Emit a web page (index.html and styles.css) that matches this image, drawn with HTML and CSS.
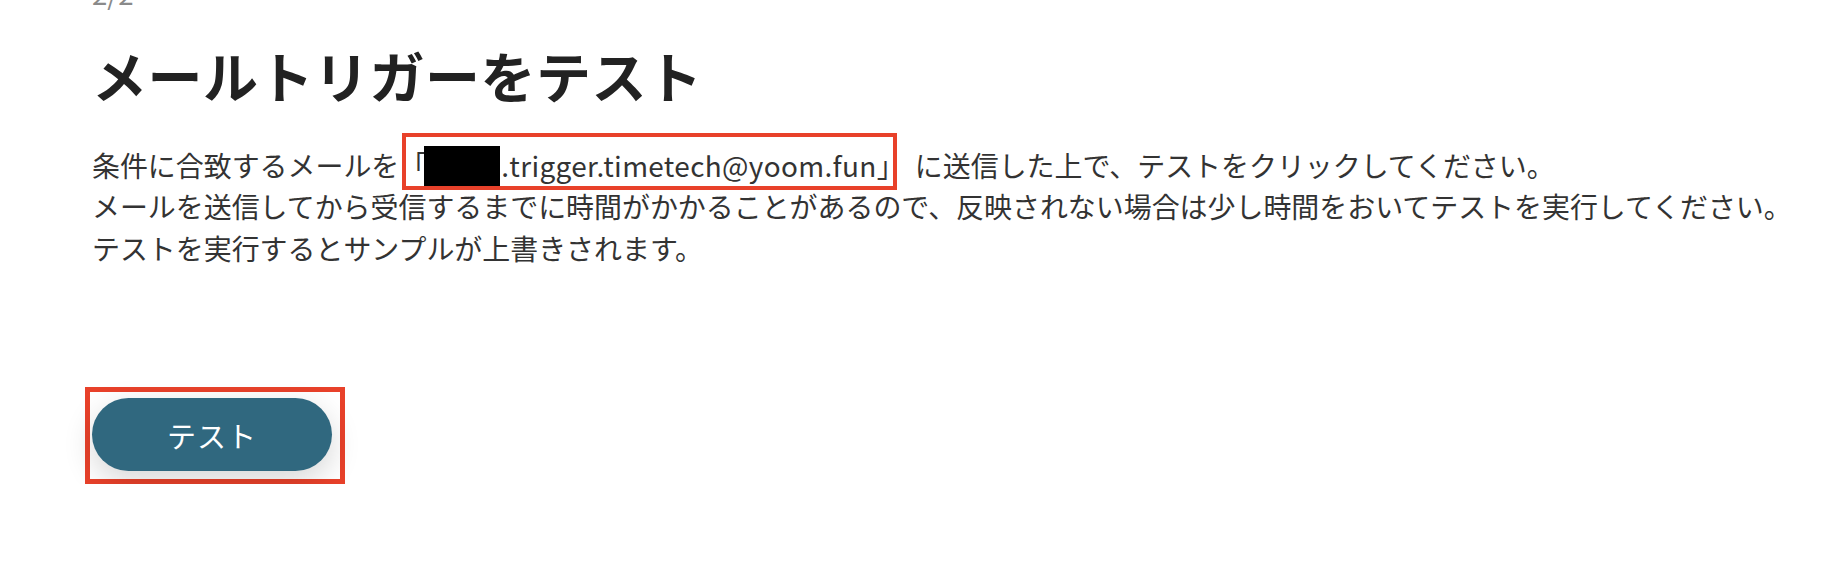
FILE: index.html
```html
<!DOCTYPE html>
<html lang="ja">
<head>
<meta charset="utf-8">
<title>メールトリガーをテスト</title>
<link rel="stylesheet" href="styles.css">
</head>
<body>
<main class="page">
  <div class="step">2/2</div>
  <h1 class="title">メールトリガーをテスト</h1>
  <div class="desc">
    <p class="line">条件に合致するメールを<span class="mark">「<span class="redact">xxxx</span><span class="addr">.trigger.timetech@yoom.fun</span>」</span> に送信した上で、テストをクリックしてください。</p>
    <p class="line">メールを送信してから受信するまでに時間がかかることがあるので、反映されない場合は少し時間をおいてテストを実行してください。</p>
    <p class="line">テストを実行するとサンプルが上書きされます。</p>
  </div>
  <div class="actions">
    <span class="btn-mark"><button class="btn" type="button">テスト</button></span>
  </div>
</main>
</body>
</html>
```

FILE: styles.css
```css
html, body {
  margin: 0;
  padding: 0;
  background: #ffffff;
}

body {
  font-family: "Noto Sans CJK JP", "Noto Sans", sans-serif;
  color: #333333;
  overflow: hidden;
}

.page {
  padding: 0 0 0 92px;
}

.step {
  margin-top: -27px;
  font-size: 27.6px;
  line-height: 41px;
  color: #8a8a8a;
}

.title {
  margin: 19px 0 0 0;
  font-size: 55px;
  line-height: 82px;
  font-weight: 700;
  letter-spacing: 0.5px;
  color: #222222;
}

.desc {
  margin-top: 30px;
}

.line {
  margin: 0;
  font-size: 27.95px;
  line-height: 41.4px;
  color: #333333;
  white-space: nowrap;
}

.mark {
  position: relative;
  margin-right: 4px;
}

.mark::after {
  content: "";
  position: absolute;
  left: 3px;
  right: 8px;
  top: -12px;
  bottom: -5px;
  border: 4px solid #e8412a;
  pointer-events: none;
}

.addr {
  letter-spacing: 0.35px;
}

.redact {
  display: inline-block;
  width: 76px;
  height: 40px;
  margin-left: -3px;
  margin-right: 1px;
  background: #000000;
  color: #000000;
  overflow: hidden;
  vertical-align: -9px;
  line-height: 40px;
}

.actions {
  margin-top: 118px;
}

.btn-mark {
  display: inline-block;
  border: 5px solid #e8412a;
  padding: 6px 8px 8px 2px;
  margin-left: -7px;
}

.btn {
  display: block;
  width: 240px;
  height: 73px;
  border: none;
  border-radius: 37px;
  background: #30687f;
  color: #ffffff;
  font-family: "Noto Sans CJK JP", "Noto Sans", sans-serif;
  font-size: 29px;
  font-weight: 400;
  letter-spacing: 1px;
  box-shadow: 0 10px 30px rgba(0, 0, 0, 0.16);
  cursor: pointer;
}
```
